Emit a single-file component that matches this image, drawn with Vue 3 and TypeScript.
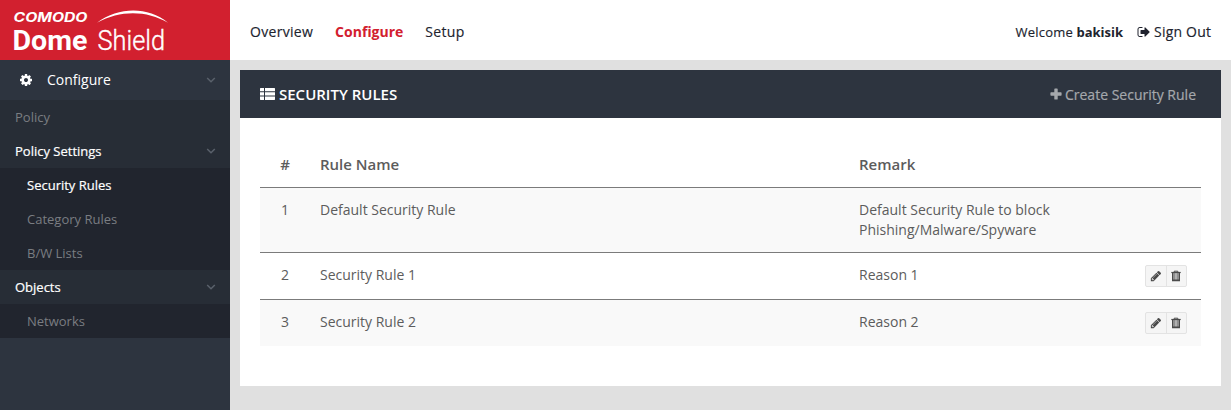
<script setup lang="ts">
interface Rule {
  id: number
  name: string
  remark: string
  editable: boolean
}

interface Entry {
  label: string
  kind: 'link' | 'group' | 'child'
  active?: boolean
}

const entries: Entry[] = [
  { label: 'Policy', kind: 'link' },
  { label: 'Policy Settings', kind: 'group' },
  { label: 'Security Rules', kind: 'child', active: true },
  { label: 'Category Rules', kind: 'child' },
  { label: 'B/W Lists', kind: 'child' },
  { label: 'Objects', kind: 'group' },
  { label: 'Networks', kind: 'child' },
]

const rules: Rule[] = [
  { id: 1, name: 'Default Security Rule', remark: 'Default Security Rule to block Phishing/Malware/Spyware', editable: false },
  { id: 2, name: 'Security Rule 1', remark: 'Reason 1', editable: true },
  { id: 3, name: 'Security Rule 2', remark: 'Reason 2', editable: true },
]
</script>

<template>
  <div class="app">
    <aside class="sidebar">
      <div class="brand">
        <svg width="230" height="60" viewBox="0 0 230 60" role="img" aria-label="Comodo Dome Shield">
          <text class="logo-top" x="13.500" y="21.700" textLength="74" lengthAdjust="spacingAndGlyphs">COMODO</text>
          <text class="logo-dome" x="12.500" y="49.500" textLength="75" lengthAdjust="spacingAndGlyphs">Dome</text>
          <text class="logo-shield" x="97.500" y="50" textLength="67.500" lengthAdjust="spacingAndGlyphs">Shield</text>
          <path d="M97 22.700C119 6.500 148 6.500 168 22.700C147 10.500 121 9.500 97 22.700Z" fill="#fff" />
        </svg>
      </div>
      <div class="section">
        <svg class="cog" viewBox="0 0 1792 1792"><path fill="currentColor" d="M1152 896q0-106-75-181t-181-75-181 75-75 181 75 181 181 75 181-75 75-181zm512-109v222q0 12-8 23t-20 13l-185 28q-19 54-39 91 35 50 107 138 10 12 10 25t-9 23q-27 37-99 108t-94 71q-12 0-26-9l-138-108q-44 23-91 38-16 136-29 186-7 28-36 28h-222q-14 0-24.500-8.500t-11.500-21.500l-28-184q-49-16-90-37l-141 107q-10 9-25 9-14 0-25-11-126-114-165-168-7-10-7-23 0-12 8-23 15-21 51-66.500t54-70.500q-27-50-41-99l-183-27q-13-2-21-12.500t-8-23.500v-222q0-12 8-23t19-13l186-28q14-46 39-92-40-57-107-138-10-12-10-24 0-10 9-23 26-36 98.500-107.500t94.500-71.500q13 0 26 10l138 107q44-23 91-38 16-136 29-186 7-28 36-28h222q14 0 24.500 8.500t11.500 21.500l28 184q49 16 90 37l142-107q9-9 24-9 13 0 25 10 129 119 165 170 7 8 7 22 0 12-8 23-15 21-51 66.500t-54 70.500q26 50 41 98l183 28q13 2 21 12.500t8 23.500z" /></svg>
        <span class="section-label">Configure</span>
        <svg class="chevron" viewBox="0 0 10 8"><path d="M1.200 2L5 5.800L8.800 2" /></svg>
      </div>
      <nav>
        <div v-for="e in entries" :key="e.label" :class="['entry', e.kind, { active: e.active }]">
          <span>{{ e.label }}</span>
          <svg v-if="e.kind === 'group'" class="chevron" viewBox="0 0 10 8"><path d="M1.200 2L5 5.800L8.800 2" /></svg>
        </div>
      </nav>
    </aside>

    <div class="main">
      <header class="topbar">
        <nav class="tabs">
          <span>Overview</span>
          <span class="current">Configure</span>
          <span>Setup</span>
        </nav>
        <div class="account">
          <span class="welcome">Welcome <b>bakisik</b></span>
          <svg class="out" viewBox="0 0 1792 1792"><path fill="currentColor" d="M704 1440q0 4 1 20t.5 26.500-3 23.500-10 19.500-20.500 6.500h-320q-119 0-203.500-84.500t-84.500-203.500v-704q0-119 84.500-203.500t203.500-84.500h320q13 0 22.500 9.500t9.500 22.500q0 4 1 20t.5 26.500-3 23.500-10 19.500-20.500 6.500h-320q-66 0-113 47t-47 113v704q0 66 47 113t113 47h312l11.500 1 11.500 3 8 5.500 7 9 2 13.500zm928-544q0 26-19 45l-544 544q-19 19-45 19t-45-19-19-45v-288h-448q-26 0-45-19t-19-45v-384q0-26 19-45t45-19h448v-288q0-26 19-45t45-19 45 19l544 544q19 19 19 45z" /></svg>
          <span class="signout">Sign Out</span>
        </div>
      </header>

      <section class="card">
        <div class="card-head">
          <svg class="list" viewBox="0 0 15 12"><path fill="currentColor" d="M.5 0H4V3.300H0V.5ZM5 0H14.500L15 .5V3.300H5ZM0 4.300H4V7.600H0ZM5 4.300H15V7.600H5ZM0 8.600H4V12H.5L0 11.500ZM5 8.600H15V11.500L14.500 12H5Z" /></svg>
          <h1>SECURITY RULES</h1>
          <div class="create">
            <svg class="plus" viewBox="0 0 12 12"><path fill="currentColor" d="M5 .5H7Q7.700 .5 7.700 1.200V4.300H10.900Q11.600 4.300 11.600 5V7Q11.600 7.700 10.900 7.700H7.700V10.900Q7.700 11.600 7 11.600H5Q4.300 11.600 4.300 10.900V7.700H1.100Q.4 7.700 .4 7V5Q.4 4.300 1.100 4.300H4.300V1.200Q4.300 .5 5 .5Z" /></svg>
            <span>Create Security Rule</span>
          </div>
        </div>
        <div class="table">
          <div class="row head">
            <span class="num">#</span><span>Rule Name</span><span>Remark</span><span></span>
          </div>
          <div v-for="r in rules" :key="r.id" class="row">
            <span class="num">{{ r.id }}</span>
            <span>{{ r.name }}</span>
            <span>{{ r.remark }}</span>
            <div class="actions">
              <div v-if="r.editable" class="buttons">
                <button type="button" aria-label="Edit">
                  <svg width="12" height="12" viewBox="0 0 1792 1792"><path fill="currentColor" d="M491 1536l91-91-235-235-91 91v107h128v128h107zm523-928q0-22-22-22-10 0-17 7l-542 542q-7 7-7 17 0 22 22 22 10 0 17-7l542-542q7-7 7-17zm-54-192l416 416-832 832h-416v-416zm683 96q0 53-37 90l-166 166-416-416 166-165q36-38 90-38 53 0 91 38l235 234q37 39 37 91z" /></svg>
                </button>
                <button type="button" aria-label="Delete">
                  <svg width="12" height="12" viewBox="0 0 12 12" fill="none" stroke="currentColor"><path d="M1.300 2.500H10.700" stroke-width="1.200" /><path d="M4.200 2.300V1.200H7.800V2.300" /><path d="M2.800 3V10.400H9.200V3" stroke-width="1.600" /><path d="M4.900 3V10M7.100 3V10" stroke-width="1" /></svg>
                </button>
              </div>
            </div>
          </div>
        </div>
      </section>
    </div>
  </div>
</template>

<style>
body {
  margin: 0;
  background: #e0e0e0;
}
</style>

<style scoped>
.app {
  display: flex;
  height: 410px;
  overflow: hidden;
  background: #e0e0e0;
  font-family: "Open Sans", "Noto Sans", sans-serif;
  font-size: 14px;
  color: #5c5c5c;
}
.sidebar {
  width: 230px;
  flex: none;
  background: #2d343f;
}
.brand {
  height: 60px;
  background: #d2202f;
}
.brand svg {
  display: block;
}
.brand text {
  fill: #fff;
}
.logo-top {
  font: italic 700 12.5px Inter, sans-serif;
}
.logo-dome {
  font: 700 28px Roboto, sans-serif;
}
.logo-shield {
  font: 300 28px Roboto, sans-serif;
  stroke: #fff;
  stroke-width: 0.4;
}
.section {
  display: flex;
  align-items: center;
  height: 40px;
  padding: 0 14px 0 19px;
  color: #fff;
}
.section-label {
  padding-bottom: 2px;
}
.cog {
  width: 14px;
  height: 14px;
  margin-right: 14px;
}
.chevron {
  width: 10px;
  height: 8px;
  margin-left: auto;
  fill: none;
  stroke: #5a616b;
  stroke-width: 1.5;
}
.entry {
  display: flex;
  align-items: center;
  height: 34px;
  padding: 0 14px 0 15px;
  background: #272d36;
  font-size: 13px;
  color: #7a7d82;
}
.entry.group,
.entry.active {
  color: #fff;
  -webkit-text-stroke: 0.2px #fff;
}
.entry.child {
  padding-left: 27px;
  background: #21252e;
}
.main {
  flex: 1;
  min-width: 0;
}
.topbar {
  display: flex;
  justify-content: space-between;
  align-items: center;
  height: 60px;
  padding: 3px 20px 0;
  box-sizing: border-box;
  background: #fff;
  color: #20232e;
  -webkit-text-stroke: 0.15px currentColor;
}
.tabs {
  display: flex;
  gap: 22px;
  letter-spacing: 0.3px;
}
.tabs .current {
  font-weight: 700;
  letter-spacing: 0;
  color: #d2202f;
  -webkit-text-stroke: 0;
}
.account {
  display: flex;
  align-items: center;
}
.welcome {
  font-size: 13px;
  letter-spacing: 0.2px;
}
.welcome b {
  letter-spacing: 0;
  -webkit-text-stroke: 0;
}
.out {
  width: 14px;
  height: 14px;
  margin: 0 3px 0 14px;
}
.signout {
  margin-right: -0.2px;
  letter-spacing: 0.2px;
}
.card {
  width: 981px;
  height: 316px;
  margin: 10px 0 0 10px;
  background: #fff;
}
.card-head {
  display: flex;
  align-items: center;
  height: 48px;
  padding: 0 25px 0 20px;
  box-sizing: border-box;
  background: #2d343f;
  color: #fff;
}
.list {
  width: 15px;
  height: 12px;
  margin-right: 4px;
}
h1 {
  margin: 0;
  font-size: 15px;
  font-weight: 600;
}
.create {
  display: flex;
  align-items: center;
  gap: 3px;
  margin-left: auto;
  color: #a5a8ac;
  -webkit-text-stroke: 0.2px currentColor;
}
.plus {
  width: 12px;
  height: 12px;
}
.table {
  padding: 24px 20px 0;
}
.row {
  display: grid;
  grid-template-columns: 50px 539px 1fr 70px;
  box-sizing: border-box;
  height: 47px;
  padding-top: 12px;
  border-top: 1px solid #7b7b7b;
  line-height: 20px;
}
.row > span:nth-child(n + 2) {
  padding-left: 10px;
}
.row > span:nth-child(3) {
  width: 210px;
}
.row.head {
  height: 45px;
  border-top: 0;
  font-size: 15px;
  font-weight: 600;
}
.row:nth-child(even) {
  background: #f9f9f9;
}
.row:nth-child(2) {
  height: 65px;
}
.num {
  text-align: center;
}
.buttons {
  display: flex;
  width: 42px;
  height: 22px;
  margin: 0 14px 0 auto;
  box-sizing: border-box;
  border: 1px solid #e3e3e3;
  border-radius: 2px;
  background: #f5f5f5;
}
button {
  display: flex;
  flex: 1;
  align-items: center;
  justify-content: center;
  padding: 0;
  border: 0;
  background: none;
  color: #4a4a4a;
}
button + button {
  border-left: 1px solid #e3e3e3;
}
</style>
